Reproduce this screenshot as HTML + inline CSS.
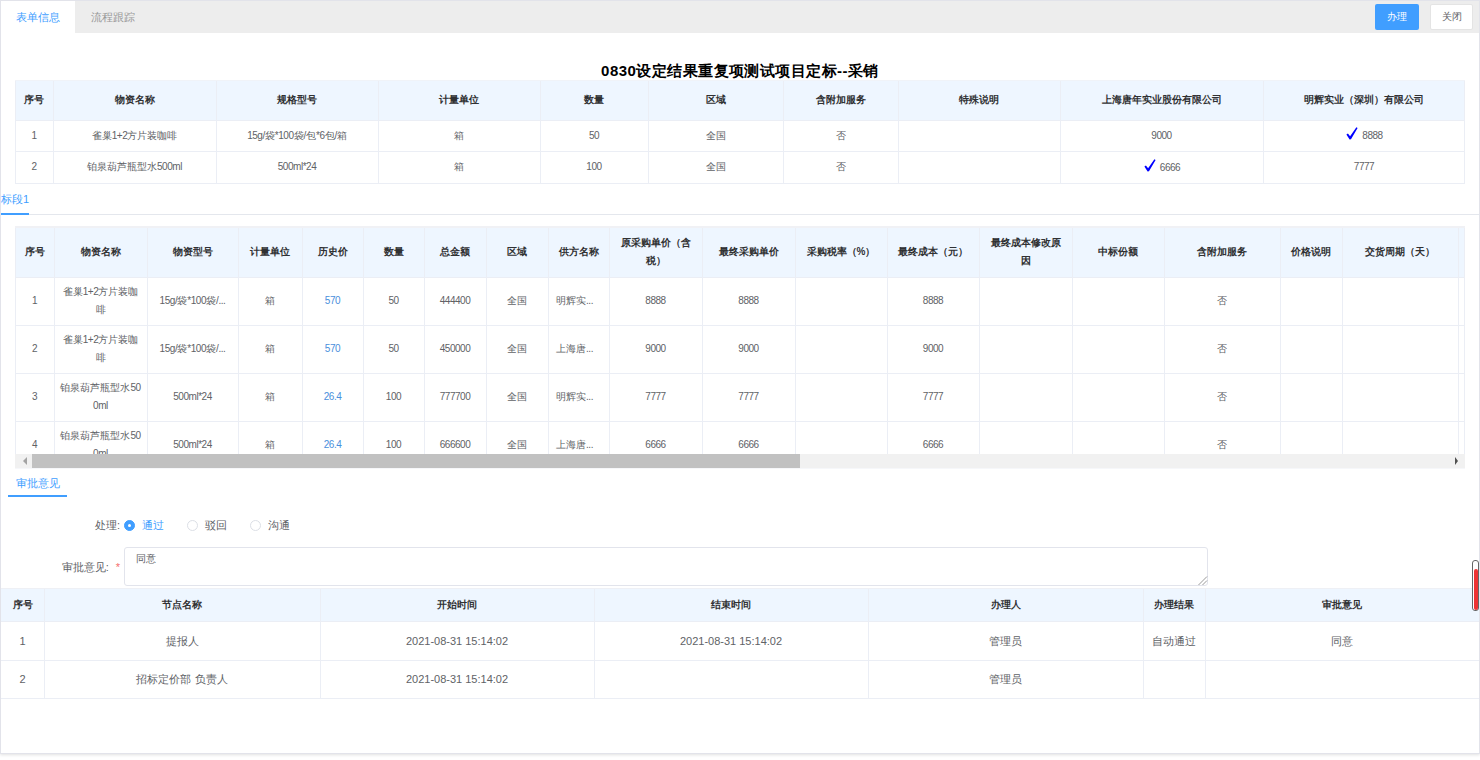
<!DOCTYPE html><html><head><meta charset="utf-8"><style>
html,body{margin:0;padding:0;background:#fff;}
body{width:1480px;height:760px;overflow:hidden;position:relative;font-family:"Liberation Sans",sans-serif;font-size:10px;}
div{box-sizing:border-box;}
.t{position:absolute;display:flex;align-items:center;text-align:center;white-space:nowrap;line-height:18px;}
.ck{margin-right:5px;position:relative;top:1px;left:1px;}
.n{font-size:10px;letter-spacing:-0.45px;}
</style></head><body>
<div style="position:absolute;left:0px;top:0px;width:1480px;height:754px;background:#fff;border:1px solid #e2e3ea;box-shadow:0 1px 3px rgba(0,0,0,0.12);"></div>
<div style="position:absolute;left:1px;top:1px;width:1478px;height:32px;background:#ededed;"></div>
<div style="position:absolute;left:1px;top:1px;width:74px;height:32px;background:#fff;"></div>
<div class="t" style="left:1px;top:1px;width:74px;height:32px;justify-content:center;color:#409eff;font-size:11px;"><span>表单信息</span></div>
<div class="t" style="left:75px;top:1px;width:75px;height:32px;justify-content:center;color:#999;font-size:11px;"><span>流程跟踪</span></div>
<div class="t" style="left:1375px;top:4px;width:44px;height:26px;background:#409eff;border-radius:2px;color:#fff;justify-content:center;font-size:10px;">办理</div>
<div class="t" style="left:1430px;top:4px;width:43px;height:26px;background:#fff;border:1px solid #e4e4e4;border-radius:2px;color:#606266;justify-content:center;font-size:10px;">关闭</div>
<div class="t" style="left:0px;top:60px;width:1480px;height:22px;justify-content:center;letter-spacing:0.45px;font-size:15px;font-weight:bold;color:#000;"><span>0830设定结果重复项测试项目定标--采销</span></div>
<div style="position:absolute;left:15px;top:80px;width:1450px;height:40px;background:#eef6ff;"></div>
<div style="position:absolute;left:15px;top:120px;width:1450px;height:1px;background:#ebeef5;"></div>
<div style="position:absolute;left:15px;top:151px;width:1450px;height:1px;background:#ebeef5;"></div>
<div style="position:absolute;left:15px;top:183px;width:1450px;height:1px;background:#ebeef5;"></div>
<div style="position:absolute;left:53px;top:80px;width:1px;height:103px;background:#ebeef5;"></div>
<div style="position:absolute;left:216px;top:80px;width:1px;height:103px;background:#ebeef5;"></div>
<div style="position:absolute;left:378px;top:80px;width:1px;height:103px;background:#ebeef5;"></div>
<div style="position:absolute;left:540px;top:80px;width:1px;height:103px;background:#ebeef5;"></div>
<div style="position:absolute;left:648px;top:80px;width:1px;height:103px;background:#ebeef5;"></div>
<div style="position:absolute;left:783px;top:80px;width:1px;height:103px;background:#ebeef5;"></div>
<div style="position:absolute;left:898px;top:80px;width:1px;height:103px;background:#ebeef5;"></div>
<div style="position:absolute;left:1060px;top:80px;width:1px;height:103px;background:#ebeef5;"></div>
<div style="position:absolute;left:1263px;top:80px;width:1px;height:103px;background:#ebeef5;"></div>
<div style="position:absolute;left:15px;top:80px;width:1px;height:104px;background:#ebeef5;"></div>
<div style="position:absolute;left:1464px;top:80px;width:1px;height:104px;background:#ebeef5;"></div>
<div style="position:absolute;left:15px;top:80px;width:1450px;height:1px;background:#f0f3f8;"></div>
<div class="t" style="left:15px;top:80px;width:38px;height:40px;justify-content:center;font-weight:bold;color:#303133;"><span>序号</span></div>
<div class="t" style="left:53px;top:80px;width:163px;height:40px;justify-content:center;font-weight:bold;color:#303133;"><span>物资名称</span></div>
<div class="t" style="left:216px;top:80px;width:162px;height:40px;justify-content:center;font-weight:bold;color:#303133;"><span>规格型号</span></div>
<div class="t" style="left:378px;top:80px;width:162px;height:40px;justify-content:center;font-weight:bold;color:#303133;"><span>计量单位</span></div>
<div class="t" style="left:540px;top:80px;width:108px;height:40px;justify-content:center;font-weight:bold;color:#303133;"><span>数量</span></div>
<div class="t" style="left:648px;top:80px;width:135px;height:40px;justify-content:center;font-weight:bold;color:#303133;"><span>区域</span></div>
<div class="t" style="left:783px;top:80px;width:115px;height:40px;justify-content:center;font-weight:bold;color:#303133;"><span>含附加服务</span></div>
<div class="t" style="left:898px;top:80px;width:162px;height:40px;justify-content:center;font-weight:bold;color:#303133;"><span>特殊说明</span></div>
<div class="t" style="left:1060px;top:80px;width:203px;height:40px;justify-content:center;font-weight:bold;color:#303133;"><span>上海唐年实业股份有限公司</span></div>
<div class="t" style="left:1263px;top:80px;width:202px;height:40px;justify-content:center;font-weight:bold;color:#303133;"><span>明辉实业（深圳）有限公司</span></div>
<div class="t" style="left:15px;top:120px;width:38px;height:31px;justify-content:center;color:#606266;"><span><span class="n">1</span></span></div>
<div class="t" style="left:53px;top:120px;width:163px;height:31px;justify-content:center;color:#606266;"><span>雀巢<span class="n">1+2</span>方片装咖啡</span></div>
<div class="t" style="left:216px;top:120px;width:162px;height:31px;justify-content:center;color:#606266;"><span><span class="n">15g/</span>袋<span class="n">*100</span>袋<span class="n">/</span>包<span class="n">*6</span>包<span class="n">/</span>箱</span></div>
<div class="t" style="left:378px;top:120px;width:162px;height:31px;justify-content:center;color:#606266;"><span>箱</span></div>
<div class="t" style="left:540px;top:120px;width:108px;height:31px;justify-content:center;color:#606266;"><span><span class="n">50</span></span></div>
<div class="t" style="left:648px;top:120px;width:135px;height:31px;justify-content:center;color:#606266;"><span>全国</span></div>
<div class="t" style="left:783px;top:120px;width:115px;height:31px;justify-content:center;color:#606266;"><span>否</span></div>
<div class="t" style="left:1060px;top:120px;width:203px;height:31px;justify-content:center;color:#606266;"><span><span class="n">9000</span></span></div>
<div class="t" style="left:1263px;top:120px;width:202px;height:31px;justify-content:center;color:#606266;"><span><svg class="ck" width="12" height="13" viewBox="0 0 12 13"><path d="M0.4 7.6 L1.9 6.4 L4.1 9.2 L10.4 0.2 L11.6 1.0 L5.0 12.3 L3.6 12.5 Z" fill="#0000ff"/></svg><span class="n">8888</span></span></div>
<div class="t" style="left:15px;top:151px;width:38px;height:32px;justify-content:center;color:#606266;"><span><span class="n">2</span></span></div>
<div class="t" style="left:53px;top:151px;width:163px;height:32px;justify-content:center;color:#606266;"><span>铂泉葫芦瓶型水<span class="n">500ml</span></span></div>
<div class="t" style="left:216px;top:151px;width:162px;height:32px;justify-content:center;color:#606266;"><span><span class="n">500ml*24</span></span></div>
<div class="t" style="left:378px;top:151px;width:162px;height:32px;justify-content:center;color:#606266;"><span>箱</span></div>
<div class="t" style="left:540px;top:151px;width:108px;height:32px;justify-content:center;color:#606266;"><span><span class="n">100</span></span></div>
<div class="t" style="left:648px;top:151px;width:135px;height:32px;justify-content:center;color:#606266;"><span>全国</span></div>
<div class="t" style="left:783px;top:151px;width:115px;height:32px;justify-content:center;color:#606266;"><span>否</span></div>
<div class="t" style="left:1060px;top:151px;width:203px;height:32px;justify-content:center;color:#606266;"><span><svg class="ck" width="12" height="13" viewBox="0 0 12 13"><path d="M0.4 7.6 L1.9 6.4 L4.1 9.2 L10.4 0.2 L11.6 1.0 L5.0 12.3 L3.6 12.5 Z" fill="#0000ff"/></svg><span class="n">6666</span></span></div>
<div class="t" style="left:1263px;top:151px;width:202px;height:32px;justify-content:center;color:#606266;"><span><span class="n">7777</span></span></div>
<div style="position:absolute;left:1px;top:214px;width:1478px;height:1px;background:#e4e7ed;"></div>
<div style="position:absolute;left:1px;top:213px;width:28px;height:2px;background:#409eff;"></div>
<div class="t" style="left:1px;top:188px;width:28px;height:22px;justify-content:flex-start;color:#409eff;font-size:11px;"><span>标段1</span></div>
<div style="position:absolute;left:0;top:0;width:1480px;height:454px;overflow:hidden;">
<div style="position:absolute;left:15px;top:226px;width:1450px;height:51px;background:#eef6ff;"></div>
<div style="position:absolute;left:15px;top:277px;width:1450px;height:1px;background:#ebeef5;"></div>
<div style="position:absolute;left:15px;top:325px;width:1450px;height:1px;background:#ebeef5;"></div>
<div style="position:absolute;left:15px;top:373px;width:1450px;height:1px;background:#ebeef5;"></div>
<div style="position:absolute;left:15px;top:421px;width:1450px;height:1px;background:#ebeef5;"></div>
<div style="position:absolute;left:15px;top:469px;width:1450px;height:1px;background:#ebeef5;"></div>
<div style="position:absolute;left:54px;top:226px;width:1px;height:243px;background:#ebeef5;"></div>
<div style="position:absolute;left:147px;top:226px;width:1px;height:243px;background:#ebeef5;"></div>
<div style="position:absolute;left:238px;top:226px;width:1px;height:243px;background:#ebeef5;"></div>
<div style="position:absolute;left:302px;top:226px;width:1px;height:243px;background:#ebeef5;"></div>
<div style="position:absolute;left:363px;top:226px;width:1px;height:243px;background:#ebeef5;"></div>
<div style="position:absolute;left:424px;top:226px;width:1px;height:243px;background:#ebeef5;"></div>
<div style="position:absolute;left:486px;top:226px;width:1px;height:243px;background:#ebeef5;"></div>
<div style="position:absolute;left:548px;top:226px;width:1px;height:243px;background:#ebeef5;"></div>
<div style="position:absolute;left:609px;top:226px;width:1px;height:243px;background:#ebeef5;"></div>
<div style="position:absolute;left:702px;top:226px;width:1px;height:243px;background:#ebeef5;"></div>
<div style="position:absolute;left:795px;top:226px;width:1px;height:243px;background:#ebeef5;"></div>
<div style="position:absolute;left:887px;top:226px;width:1px;height:243px;background:#ebeef5;"></div>
<div style="position:absolute;left:979px;top:226px;width:1px;height:243px;background:#ebeef5;"></div>
<div style="position:absolute;left:1072px;top:226px;width:1px;height:243px;background:#ebeef5;"></div>
<div style="position:absolute;left:1164px;top:226px;width:1px;height:243px;background:#ebeef5;"></div>
<div style="position:absolute;left:1280px;top:226px;width:1px;height:243px;background:#ebeef5;"></div>
<div style="position:absolute;left:1342px;top:226px;width:1px;height:243px;background:#ebeef5;"></div>
<div style="position:absolute;left:1458px;top:226px;width:1px;height:243px;background:#ebeef5;"></div>
<div style="position:absolute;left:15px;top:226px;width:1px;height:244px;background:#ebeef5;"></div>
<div style="position:absolute;left:1464px;top:226px;width:1px;height:244px;background:#ebeef5;"></div>
<div style="position:absolute;left:15px;top:226px;width:1450px;height:1px;background:#f0f3f8;"></div>
<div class="t" style="left:15px;top:226px;width:39px;height:51px;justify-content:center;font-weight:bold;color:#303133;"><span>序号</span></div>
<div class="t" style="left:54px;top:226px;width:93px;height:51px;justify-content:center;font-weight:bold;color:#303133;"><span>物资名称</span></div>
<div class="t" style="left:147px;top:226px;width:91px;height:51px;justify-content:center;font-weight:bold;color:#303133;"><span>物资型号</span></div>
<div class="t" style="left:238px;top:226px;width:64px;height:51px;justify-content:center;font-weight:bold;color:#303133;"><span>计量单位</span></div>
<div class="t" style="left:302px;top:226px;width:61px;height:51px;justify-content:center;font-weight:bold;color:#303133;"><span>历史价</span></div>
<div class="t" style="left:363px;top:226px;width:61px;height:51px;justify-content:center;font-weight:bold;color:#303133;"><span>数量</span></div>
<div class="t" style="left:424px;top:226px;width:62px;height:51px;justify-content:center;font-weight:bold;color:#303133;"><span>总金额</span></div>
<div class="t" style="left:486px;top:226px;width:62px;height:51px;justify-content:center;font-weight:bold;color:#303133;"><span>区域</span></div>
<div class="t" style="left:548px;top:226px;width:61px;height:51px;justify-content:center;font-weight:bold;color:#303133;"><span>供方名称</span></div>
<div class="t" style="left:609px;top:226px;width:93px;height:51px;justify-content:center;font-weight:bold;color:#303133;"><span>原采购单价（含<br>税）</span></div>
<div class="t" style="left:702px;top:226px;width:93px;height:51px;justify-content:center;font-weight:bold;color:#303133;"><span>最终采购单价</span></div>
<div class="t" style="left:795px;top:226px;width:92px;height:51px;justify-content:center;font-weight:bold;color:#303133;"><span>采购税率（%）</span></div>
<div class="t" style="left:887px;top:226px;width:92px;height:51px;justify-content:center;font-weight:bold;color:#303133;"><span>最终成本（元）</span></div>
<div class="t" style="left:979px;top:226px;width:93px;height:51px;justify-content:center;font-weight:bold;color:#303133;"><span>最终成本修改原<br>因</span></div>
<div class="t" style="left:1072px;top:226px;width:92px;height:51px;justify-content:center;font-weight:bold;color:#303133;"><span>中标份额</span></div>
<div class="t" style="left:1164px;top:226px;width:116px;height:51px;justify-content:center;font-weight:bold;color:#303133;"><span>含附加服务</span></div>
<div class="t" style="left:1280px;top:226px;width:62px;height:51px;justify-content:center;font-weight:bold;color:#303133;"><span>价格说明</span></div>
<div class="t" style="left:1342px;top:226px;width:116px;height:51px;justify-content:center;font-weight:bold;color:#303133;"><span>交货周期（天）</span></div>
<div class="t" style="left:1458px;top:226px;width:7px;height:51px;justify-content:center;font-weight:bold;color:#303133;"><span></span></div>
<div class="t" style="left:15px;top:277px;width:39px;height:48px;justify-content:center;color:#606266;"><span><span class="n">1</span></span></div>
<div class="t" style="left:54px;top:277px;width:93px;height:48px;justify-content:center;color:#606266;"><span>雀巢<span class="n">1+2</span>方片装咖<br>啡</span></div>
<div class="t" style="left:147px;top:277px;width:91px;height:48px;justify-content:center;color:#606266;"><span><span class="n">15g/</span>袋<span class="n">*100</span>袋<span class="n">/...</span></span></div>
<div class="t" style="left:238px;top:277px;width:64px;height:48px;justify-content:center;color:#606266;"><span>箱</span></div>
<div class="t" style="left:302px;top:277px;width:61px;height:48px;justify-content:center;color:#606266;"><span><span style="color:#4a8fdc"><span class="n">570</span></span></span></div>
<div class="t" style="left:363px;top:277px;width:61px;height:48px;justify-content:center;color:#606266;"><span><span class="n">50</span></span></div>
<div class="t" style="left:424px;top:277px;width:62px;height:48px;justify-content:center;color:#606266;"><span><span class="n">444400</span></span></div>
<div class="t" style="left:486px;top:277px;width:62px;height:48px;justify-content:center;color:#606266;"><span>全国</span></div>
<div class="t" style="left:556px;top:277px;width:53px;height:48px;justify-content:flex-start;color:#606266;"><span>明辉实<span class="n">...</span></span></div>
<div class="t" style="left:609px;top:277px;width:93px;height:48px;justify-content:center;color:#606266;"><span><span class="n">8888</span></span></div>
<div class="t" style="left:702px;top:277px;width:93px;height:48px;justify-content:center;color:#606266;"><span><span class="n">8888</span></span></div>
<div class="t" style="left:887px;top:277px;width:92px;height:48px;justify-content:center;color:#606266;"><span><span class="n">8888</span></span></div>
<div class="t" style="left:1164px;top:277px;width:116px;height:48px;justify-content:center;color:#606266;"><span>否</span></div>
<div class="t" style="left:15px;top:325px;width:39px;height:48px;justify-content:center;color:#606266;"><span><span class="n">2</span></span></div>
<div class="t" style="left:54px;top:325px;width:93px;height:48px;justify-content:center;color:#606266;"><span>雀巢<span class="n">1+2</span>方片装咖<br>啡</span></div>
<div class="t" style="left:147px;top:325px;width:91px;height:48px;justify-content:center;color:#606266;"><span><span class="n">15g/</span>袋<span class="n">*100</span>袋<span class="n">/...</span></span></div>
<div class="t" style="left:238px;top:325px;width:64px;height:48px;justify-content:center;color:#606266;"><span>箱</span></div>
<div class="t" style="left:302px;top:325px;width:61px;height:48px;justify-content:center;color:#606266;"><span><span style="color:#4a8fdc"><span class="n">570</span></span></span></div>
<div class="t" style="left:363px;top:325px;width:61px;height:48px;justify-content:center;color:#606266;"><span><span class="n">50</span></span></div>
<div class="t" style="left:424px;top:325px;width:62px;height:48px;justify-content:center;color:#606266;"><span><span class="n">450000</span></span></div>
<div class="t" style="left:486px;top:325px;width:62px;height:48px;justify-content:center;color:#606266;"><span>全国</span></div>
<div class="t" style="left:556px;top:325px;width:53px;height:48px;justify-content:flex-start;color:#606266;"><span>上海唐<span class="n">...</span></span></div>
<div class="t" style="left:609px;top:325px;width:93px;height:48px;justify-content:center;color:#606266;"><span><span class="n">9000</span></span></div>
<div class="t" style="left:702px;top:325px;width:93px;height:48px;justify-content:center;color:#606266;"><span><span class="n">9000</span></span></div>
<div class="t" style="left:887px;top:325px;width:92px;height:48px;justify-content:center;color:#606266;"><span><span class="n">9000</span></span></div>
<div class="t" style="left:1164px;top:325px;width:116px;height:48px;justify-content:center;color:#606266;"><span>否</span></div>
<div class="t" style="left:15px;top:373px;width:39px;height:48px;justify-content:center;color:#606266;"><span><span class="n">3</span></span></div>
<div class="t" style="left:54px;top:373px;width:93px;height:48px;justify-content:center;color:#606266;"><span>铂泉葫芦瓶型水<span class="n">50</span><br><span class="n">0ml</span></span></div>
<div class="t" style="left:147px;top:373px;width:91px;height:48px;justify-content:center;color:#606266;"><span><span class="n">500ml*24</span></span></div>
<div class="t" style="left:238px;top:373px;width:64px;height:48px;justify-content:center;color:#606266;"><span>箱</span></div>
<div class="t" style="left:302px;top:373px;width:61px;height:48px;justify-content:center;color:#606266;"><span><span style="color:#4a8fdc"><span class="n">26.4</span></span></span></div>
<div class="t" style="left:363px;top:373px;width:61px;height:48px;justify-content:center;color:#606266;"><span><span class="n">100</span></span></div>
<div class="t" style="left:424px;top:373px;width:62px;height:48px;justify-content:center;color:#606266;"><span><span class="n">777700</span></span></div>
<div class="t" style="left:486px;top:373px;width:62px;height:48px;justify-content:center;color:#606266;"><span>全国</span></div>
<div class="t" style="left:556px;top:373px;width:53px;height:48px;justify-content:flex-start;color:#606266;"><span>明辉实<span class="n">...</span></span></div>
<div class="t" style="left:609px;top:373px;width:93px;height:48px;justify-content:center;color:#606266;"><span><span class="n">7777</span></span></div>
<div class="t" style="left:702px;top:373px;width:93px;height:48px;justify-content:center;color:#606266;"><span><span class="n">7777</span></span></div>
<div class="t" style="left:887px;top:373px;width:92px;height:48px;justify-content:center;color:#606266;"><span><span class="n">7777</span></span></div>
<div class="t" style="left:1164px;top:373px;width:116px;height:48px;justify-content:center;color:#606266;"><span>否</span></div>
<div class="t" style="left:15px;top:421px;width:39px;height:48px;justify-content:center;color:#606266;"><span><span class="n">4</span></span></div>
<div class="t" style="left:54px;top:421px;width:93px;height:48px;justify-content:center;color:#606266;"><span>铂泉葫芦瓶型水<span class="n">50</span><br><span class="n">0ml</span></span></div>
<div class="t" style="left:147px;top:421px;width:91px;height:48px;justify-content:center;color:#606266;"><span><span class="n">500ml*24</span></span></div>
<div class="t" style="left:238px;top:421px;width:64px;height:48px;justify-content:center;color:#606266;"><span>箱</span></div>
<div class="t" style="left:302px;top:421px;width:61px;height:48px;justify-content:center;color:#606266;"><span><span style="color:#4a8fdc"><span class="n">26.4</span></span></span></div>
<div class="t" style="left:363px;top:421px;width:61px;height:48px;justify-content:center;color:#606266;"><span><span class="n">100</span></span></div>
<div class="t" style="left:424px;top:421px;width:62px;height:48px;justify-content:center;color:#606266;"><span><span class="n">666600</span></span></div>
<div class="t" style="left:486px;top:421px;width:62px;height:48px;justify-content:center;color:#606266;"><span>全国</span></div>
<div class="t" style="left:556px;top:421px;width:53px;height:48px;justify-content:flex-start;color:#606266;"><span>上海唐<span class="n">...</span></span></div>
<div class="t" style="left:609px;top:421px;width:93px;height:48px;justify-content:center;color:#606266;"><span><span class="n">6666</span></span></div>
<div class="t" style="left:702px;top:421px;width:93px;height:48px;justify-content:center;color:#606266;"><span><span class="n">6666</span></span></div>
<div class="t" style="left:887px;top:421px;width:92px;height:48px;justify-content:center;color:#606266;"><span><span class="n">6666</span></span></div>
<div class="t" style="left:1164px;top:421px;width:116px;height:48px;justify-content:center;color:#606266;"><span>否</span></div>
<div style="position:absolute;left:15px;top:226px;width:1450px;height:2px;background:#f0f1f5;"></div>
</div>
<div style="position:absolute;left:15px;top:454px;width:1450px;height:14px;background:#f1f1f1;"></div>
<div style="position:absolute;left:15px;top:468px;width:1450px;height:1px;background:#f6f7fa;"></div>
<div style="position:absolute;left:32px;top:454px;width:768px;height:14px;background:#c1c1c1;"></div>
<div style="position:absolute;left:23px;top:457px;width:0;height:0;border-top:4px solid transparent;border-bottom:4px solid transparent;border-right:4px solid #a3a3a3;"></div>
<div style="position:absolute;left:1455px;top:457px;width:0;height:0;border-top:4px solid transparent;border-bottom:4px solid transparent;border-left:3px solid #505050;"></div>
<div class="t" style="left:8px;top:472px;width:59px;height:22px;justify-content:center;color:#409eff;font-size:11px;"><span>审批意见</span></div>
<div style="position:absolute;left:8px;top:495px;width:59px;height:2px;background:#409eff;"></div>
<div class="t" style="left:60px;top:514px;width:60px;height:22px;justify-content:flex-end;color:#606266;font-size:11px;"><span>处理:</span></div>
<div style="position:absolute;left:124px;top:520px;width:11px;height:11px;border-radius:50%;border:1px solid #409eff;background:#409eff;"></div>
<div style="position:absolute;left:128px;top:524px;width:3px;height:3px;border-radius:50%;background:#fff;"></div>
<div class="t" style="left:142px;top:514px;width:30px;height:22px;justify-content:flex-start;color:#409eff;font-size:11px;"><span>通过</span></div>
<div style="position:absolute;left:187px;top:520px;width:11px;height:11px;border-radius:50%;border:1px solid #dcdfe6;background:#fff;"></div>
<div class="t" style="left:205px;top:514px;width:30px;height:22px;justify-content:flex-start;color:#606266;font-size:11px;"><span>驳回</span></div>
<div style="position:absolute;left:250px;top:520px;width:11px;height:11px;border-radius:50%;border:1px solid #dcdfe6;background:#fff;"></div>
<div class="t" style="left:268px;top:514px;width:30px;height:22px;justify-content:flex-start;color:#606266;font-size:11px;"><span>沟通</span></div>
<div class="t" style="left:40px;top:556px;width:80px;height:22px;justify-content:flex-end;color:#606266;font-size:11px;"><span>审批意见:<span style="color:#f56c6c;margin-left:7px">*</span></span></div>
<div style="position:absolute;left:124px;top:547px;width:1084px;height:39px;background:#fff;border:1px solid #e2e4ec;border-radius:3px;"></div>
<div class="t" style="left:136px;top:549px;width:40px;height:20px;justify-content:flex-start;color:#606266;font-size:10px;"><span>同意</span></div>
<svg style="position:absolute;left:1198px;top:576px" width="10" height="10"><path d="M9 0.5 L0.5 9 M9 4.5 L4.5 9" stroke="#999" stroke-width="1"/></svg>
<div style="position:absolute;left:1px;top:588px;width:1478px;height:1px;background:#eef0f5;"></div>
<div style="position:absolute;left:1px;top:589px;width:1478px;height:32px;background:#eef6ff;"></div>
<div style="position:absolute;left:1px;top:621px;width:1478px;height:1px;background:#ebeef5;"></div>
<div style="position:absolute;left:1px;top:660px;width:1478px;height:1px;background:#ebeef5;"></div>
<div style="position:absolute;left:1px;top:698px;width:1478px;height:1px;background:#ebeef5;"></div>
<div style="position:absolute;left:44px;top:589px;width:1px;height:109px;background:#ebeef5;"></div>
<div style="position:absolute;left:320px;top:589px;width:1px;height:109px;background:#ebeef5;"></div>
<div style="position:absolute;left:594px;top:589px;width:1px;height:109px;background:#ebeef5;"></div>
<div style="position:absolute;left:868px;top:589px;width:1px;height:109px;background:#ebeef5;"></div>
<div style="position:absolute;left:1143px;top:589px;width:1px;height:109px;background:#ebeef5;"></div>
<div style="position:absolute;left:1205px;top:589px;width:1px;height:109px;background:#ebeef5;"></div>
<div class="t" style="left:1px;top:589px;width:43px;height:32px;justify-content:center;font-weight:bold;color:#303133;"><span>序号</span></div>
<div class="t" style="left:44px;top:589px;width:276px;height:32px;justify-content:center;font-weight:bold;color:#303133;"><span>节点名称</span></div>
<div class="t" style="left:320px;top:589px;width:274px;height:32px;justify-content:center;font-weight:bold;color:#303133;"><span>开始时间</span></div>
<div class="t" style="left:594px;top:589px;width:274px;height:32px;justify-content:center;font-weight:bold;color:#303133;"><span>结束时间</span></div>
<div class="t" style="left:868px;top:589px;width:275px;height:32px;justify-content:center;font-weight:bold;color:#303133;"><span>办理人</span></div>
<div class="t" style="left:1143px;top:589px;width:62px;height:32px;justify-content:center;font-weight:bold;color:#303133;"><span>办理结果</span></div>
<div class="t" style="left:1205px;top:589px;width:274px;height:32px;justify-content:center;font-weight:bold;color:#303133;"><span>审批意见</span></div>
<div class="t" style="left:1px;top:621px;width:43px;height:39px;justify-content:center;color:#606266;font-size:11px;"><span>1</span></div>
<div class="t" style="left:44px;top:621px;width:276px;height:39px;justify-content:center;color:#606266;font-size:11px;"><span>提报人</span></div>
<div class="t" style="left:320px;top:621px;width:274px;height:39px;justify-content:center;color:#606266;font-size:11px;"><span>2021-08-31 15:14:02</span></div>
<div class="t" style="left:594px;top:621px;width:274px;height:39px;justify-content:center;color:#606266;font-size:11px;"><span>2021-08-31 15:14:02</span></div>
<div class="t" style="left:868px;top:621px;width:275px;height:39px;justify-content:center;color:#606266;font-size:11px;"><span>管理员</span></div>
<div class="t" style="left:1143px;top:621px;width:62px;height:39px;justify-content:center;color:#606266;font-size:11px;"><span>自动通过</span></div>
<div class="t" style="left:1205px;top:621px;width:274px;height:39px;justify-content:center;color:#606266;font-size:11px;"><span>同意</span></div>
<div class="t" style="left:1px;top:660px;width:43px;height:38px;justify-content:center;color:#606266;font-size:11px;"><span>2</span></div>
<div class="t" style="left:44px;top:660px;width:276px;height:38px;justify-content:center;color:#606266;font-size:11px;"><span>招标定价部 负责人</span></div>
<div class="t" style="left:320px;top:660px;width:274px;height:38px;justify-content:center;color:#606266;font-size:11px;"><span>2021-08-31 15:14:02</span></div>
<div class="t" style="left:868px;top:660px;width:275px;height:38px;justify-content:center;color:#606266;font-size:11px;"><span>管理员</span></div>
<div style="position:absolute;left:1472px;top:560px;width:7px;height:51px;border:1px solid #666;border-radius:3px;background:#fff;"></div>
<div style="position:absolute;left:1474px;top:569px;width:4px;height:41px;background:#ee3333;border-radius:2px;"></div>
</body></html>
